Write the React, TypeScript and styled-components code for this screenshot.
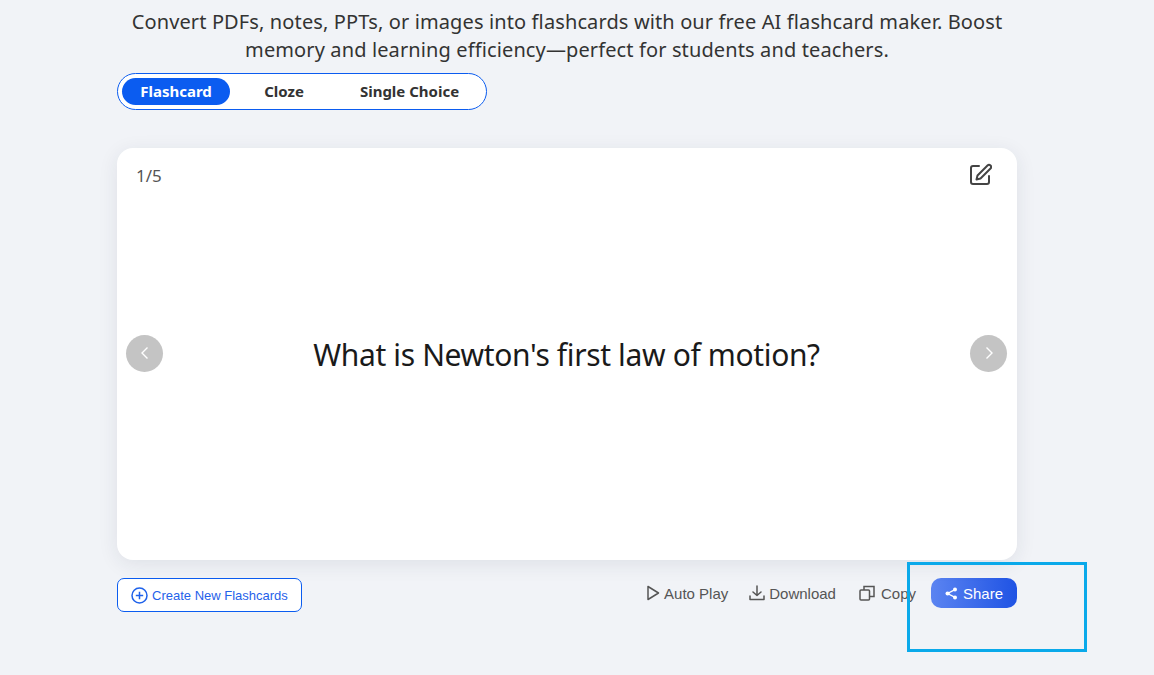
import React from "react";
import styled, { createGlobalStyle } from "styled-components";

const GlobalStyle = createGlobalStyle`
  html, body {
    margin: 0;
    padding: 0;
    height: 100%;
    overflow: hidden;
    background: #f1f3f7;
    font-family: "Noto Sans", "Open Sans", sans-serif;
  }
`;

const Page = styled.div`
  position: relative;
  width: 1154px;
  height: 675px;
  padding-left: 117px;
  box-sizing: border-box;
`;

const Column = styled.div`
  display: flex;
  flex-direction: column;
  width: 900px;
  padding-top: 8px;
`;

const Intro = styled.p`
  margin: 0 0 9px;
  width: 900px;
  color: #333;
  font-size: 20px;
  line-height: 28px;
  letter-spacing: 0.12px;
  text-align: center;
`;

const Tabs = styled.div`
  display: flex;
  align-items: center;
  width: 370px;
  height: 37px;
  padding: 0 4px;
  box-sizing: border-box;
  border: 1px solid #0b5cf0;
  border-radius: 19px;
  background: #fff;
`;

const Tab = styled.div<{ $active?: boolean; $width: number }>`
  display: flex;
  align-items: center;
  justify-content: center;
  width: ${(p) => p.$width}px;
  height: 27px;
  padding-bottom: 2px;
  box-sizing: border-box;
  border-radius: 14px;
  background: ${(p) => (p.$active ? "#0b5cf0" : "transparent")};
  color: ${(p) => (p.$active ? "#fff" : "#333")};
  font-size: 15px;
  font-weight: 700;
`;

const Card = styled.section`
  position: relative;
  display: flex;
  align-items: center;
  justify-content: space-between;
  height: 412px;
  margin-top: 38px;
  padding: 0 10px 2px 9px;
  box-sizing: border-box;
  border-radius: 16px;
  background: #fff;
  box-shadow: 0 4px 20px rgba(30, 40, 70, 0.09);
`;

const Counter = styled.span`
  position: absolute;
  left: 19px;
  top: 16px;
  color: #555;
  font-size: 17px;
  line-height: 24px;
`;

const EditButton = styled.span`
  position: absolute;
  right: 25px;
  top: 15px;
  display: flex;
  color: #444;
`;

const Question = styled.h2`
  margin: 4px 0 0;
  color: #1a1a1a;
  font-size: 30px;
  font-weight: 400;
  line-height: 40px;
  letter-spacing: -0.36px;
`;

const ArrowButton = styled.span`
  display: flex;
  align-items: center;
  justify-content: center;
  width: 37px;
  height: 37px;
  border-radius: 50%;
  background: #c4c4c4;
  color: #fff;
`;

const Footer = styled.div`
  display: flex;
  align-items: flex-start;
  justify-content: space-between;
  margin-top: 18px;
`;

const CreateButton = styled.div`
  display: flex;
  align-items: center;
  gap: 4px;
  width: 185px;
  height: 34px;
  padding-left: 13px;
  box-sizing: border-box;
  border: 1px solid #0b5cf0;
  border-radius: 7px;
  background: #fff;
  color: #1f62ea;
  font-family: "Liberation Sans", Arial, sans-serif;
  font-size: 13px;
`;

const Actions = styled.div`
  display: flex;
  align-items: center;
`;

const Action = styled.span<{ $gap: number; $mr: number }>`
  display: flex;
  align-items: center;
  gap: ${(p) => p.$gap}px;
  margin-right: ${(p) => p.$mr}px;
  color: #555;
  font-family: "Liberation Sans", Arial, sans-serif;
  font-size: 15px;
`;

const ShareButton = styled.div`
  display: flex;
  align-items: center;
  gap: 5px;
  width: 86px;
  height: 30px;
  padding-left: 14px;
  box-sizing: border-box;
  border-radius: 10px;
  background: linear-gradient(90deg, #5b84f1 0%, #1f53e4 100%);
  color: #fff;
  font-family: "Liberation Sans", Arial, sans-serif;
  font-size: 15px;
`;

const Highlight = styled.div`
  position: absolute;
  left: 907px;
  top: 562px;
  width: 180px;
  height: 90px;
  box-sizing: border-box;
  border: 3px solid #0aa9ea;
  pointer-events: none;
`;

const Chevron = ({ d }: { d: string }) => (
  <svg width="14" height="16" viewBox="0 0 14 16" fill="none" stroke="currentColor" strokeWidth="1.4">
    <path d={d} />
  </svg>
);

export default function App() {
  return (
    <Page>
      <GlobalStyle />
      <Column>
        <Intro>
          Convert PDFs, notes, PPTs, or images into flashcards with our free AI flashcard maker. Boost
          <br />
          memory and learning efficiency—perfect for students and teachers.
        </Intro>
        <Tabs>
          <Tab $active $width={108}>Flashcard</Tab>
          <Tab $width={108}>Cloze</Tab>
          <Tab $width={143}>Single Choice</Tab>
        </Tabs>
        <Card>
          <Counter>1/5</Counter>
          <EditButton>
            <svg width="24" height="24" viewBox="0 0 24 24" fill="none" stroke="currentColor" strokeWidth="2" strokeLinecap="round" strokeLinejoin="round">
              <path d="M11 4H5a2 2 0 0 0-2 2v14a2 2 0 0 0 2 2h14a2 2 0 0 0 2-2v-6" transform="translate(0 -1)" />
              <path d="M19.5 2.5a2.1 2.1 0 0 1 3 3L12.5 15.5 8.5 16.5l1-4z" />
            </svg>
          </EditButton>
          <ArrowButton>
            <Chevron d="M9.5 2.5 4 8l5.5 5.5" />
          </ArrowButton>
          <Question>What is Newton's first law of motion?</Question>
          <ArrowButton>
            <Chevron d="M4.5 2.5 10 8l-5.5 5.5" />
          </ArrowButton>
        </Card>
        <Footer>
          <CreateButton>
            <svg width="17" height="17" viewBox="0 0 17 17" fill="none" stroke="currentColor" strokeWidth="1.5">
              <circle cx="8.5" cy="8.5" r="7.5" />
              <path d="M8.5 4.8v7.4M4.8 8.5h7.4" />
            </svg>
            Create New Flashcards
          </CreateButton>
          <Actions>
            <Action $gap={4} $mr={21}>
              <svg width="14" height="16" viewBox="0 0 14 16" fill="none" stroke="currentColor" strokeWidth="1.5" strokeLinejoin="round">
                <path d="M2 1.5v13l10.5-6.5z" />
              </svg>
              Auto Play
            </Action>
            <Action $gap={4} $mr={23}>
              <svg width="16" height="16" viewBox="0 0 16 16" fill="none" stroke="currentColor" strokeWidth="1.5" strokeLinecap="round" strokeLinejoin="round">
                <path d="M8 1v9.5M4 7l4 3.5L12 7M1 11v3.5h14V11" />
              </svg>
              Download
            </Action>
            <Action $gap={6} $mr={15}>
              <svg width="16" height="16" viewBox="0 0 16 16" fill="none" stroke="currentColor" strokeWidth="1.5">
                <rect x="1" y="5" width="9.5" height="10" rx="1" />
                <path d="M5 5V1.5h10V11.5h-4.5" />
              </svg>
              Copy
            </Action>
            <ShareButton>
              <svg width="13" height="13" viewBox="0 0 13 13" fill="currentColor" stroke="currentColor">
                <circle cx="10" cy="2.6" r="2" stroke="none" />
                <circle cx="10" cy="10.4" r="2" stroke="none" />
                <circle cx="2.6" cy="6.5" r="2.1" stroke="none" />
                <path d="M10 2.6 2.6 6.5l7.4 3.9" fill="none" strokeWidth="1.3" />
              </svg>
              Share
            </ShareButton>
          </Actions>
        </Footer>
      </Column>
      <Highlight />
    </Page>
  );
}
